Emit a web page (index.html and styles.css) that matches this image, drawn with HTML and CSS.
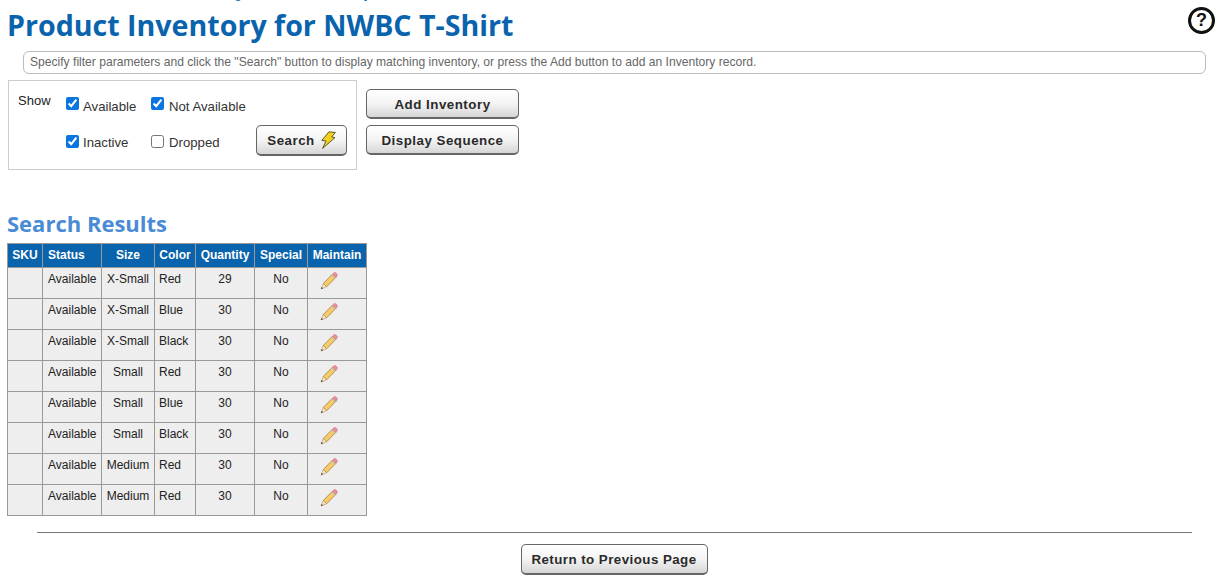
FILE: index.html
```html
<!DOCTYPE html>
<html lang="en">
<head>
  <meta charset="UTF-8">
  <title>Product Inventory</title>
  <link rel="stylesheet" href="styles.css">
</head>
<body>
  <svg class="icon-defs" width="0" height="0">
    <defs>
      <symbol id="pencil" viewBox="0 0 18 18">
        <path d="M3.4 11.4 L12.6 2 L15.9 5.3 L6.6 14.8 Z" fill="#f6cb68" stroke="#a47c3a" stroke-width="0.8"/>
        <path d="M3.4 11.4 L6.6 14.8 L1 17 Z" fill="#f5e6c8" stroke="#a47c3a" stroke-width="0.5"/>
        <path d="M1.7 15 L3 16.2 L1 17 Z" fill="#333"/>
        <path d="M12.6 2 L14 0.7 Q15 0.1 16.2 1.2 L17 2 Q17.8 3.1 17 4.1 L15.9 5.3 Z" fill="#ee8f99" stroke="#c8606e" stroke-width="0.5"/>
        <path d="M11.8 2.8 L15.1 6.1" stroke="#bdbdbd" stroke-width="1.3"/>
      </symbol>
    </defs>
  </svg>

  <!-- Breadcrumb is scrolled off the top, only the descenders still show -->
  <div class="crumbs">Catalog &gt; Product Inventory</div>

  <!-- Title row, the help icon sits in the corner -->
  <header class="page-head">
    <h1 class="page-title">Product Inventory for NWBC T-Shirt</h1>
    <a href="#" class="help-link" aria-label="Help">?</a>
  </header>

  <p class="hint">Specify filter parameters and click the "Search" button to display matching inventory, or press the Add button to add an Inventory record.</p>

  <section class="controls">
    <form class="filter-box">
      <span class="filter-label">Show</span>
      <label class="check check-a check-top"><input type="checkbox" checked> Available</label>
      <label class="check check-b check-top"><input type="checkbox" checked> Not Available</label>
      <label class="check check-a"><input type="checkbox" checked> Inactive</label>
      <label class="check check-b"><input type="checkbox"> Dropped</label>
      <button type="button" class="btn btn-search">Search
        <svg class="bolt" viewBox="0 0 16 18" width="16" height="18">
          <path d="M9 0.8 L15.4 1.5 L11.6 6 L15 6.6 L2.6 17.4 L6 10 L1.8 9.4 Z" fill="#f2d21e" stroke="#5c5a2a" stroke-width="1"/>
        </svg>
      </button>
    </form>
    <div class="action-buttons">
      <button type="button" class="btn btn-wide">Add Inventory</button>
      <button type="button" class="btn btn-wide">Display Sequence</button>
    </div>
  </section>

  <h2 class="section-title">Search Results</h2>

  <table class="results">
    <colgroup>
      <col class="c-sku"><col class="c-status"><col class="c-size"><col class="c-color"><col class="c-qty"><col class="c-special"><col class="c-maintain">
    </colgroup>
    <thead>
      <tr><th>SKU</th><th class="left">Status</th><th>Size</th><th>Color</th><th>Quantity</th><th>Special</th><th>Maintain</th></tr>
    </thead>
    <tbody>
      <tr><td></td><td>Available</td><td class="mid">X-Small</td><td class="color">Red</td><td class="mid">29</td><td class="mid">No</td><td class="edit"><svg width="18" height="18"><use href="#pencil"/></svg></td></tr>
      <tr><td></td><td>Available</td><td class="mid">X-Small</td><td class="color">Blue</td><td class="mid">30</td><td class="mid">No</td><td class="edit"><svg width="18" height="18"><use href="#pencil"/></svg></td></tr>
      <tr><td></td><td>Available</td><td class="mid">X-Small</td><td class="color">Black</td><td class="mid">30</td><td class="mid">No</td><td class="edit"><svg width="18" height="18"><use href="#pencil"/></svg></td></tr>
      <tr><td></td><td>Available</td><td class="mid">Small</td><td class="color">Red</td><td class="mid">30</td><td class="mid">No</td><td class="edit"><svg width="18" height="18"><use href="#pencil"/></svg></td></tr>
      <tr><td></td><td>Available</td><td class="mid">Small</td><td class="color">Blue</td><td class="mid">30</td><td class="mid">No</td><td class="edit"><svg width="18" height="18"><use href="#pencil"/></svg></td></tr>
      <tr><td></td><td>Available</td><td class="mid">Small</td><td class="color">Black</td><td class="mid">30</td><td class="mid">No</td><td class="edit"><svg width="18" height="18"><use href="#pencil"/></svg></td></tr>
      <tr><td></td><td>Available</td><td class="mid">Medium</td><td class="color">Red</td><td class="mid">30</td><td class="mid">No</td><td class="edit"><svg width="18" height="18"><use href="#pencil"/></svg></td></tr>
      <tr><td></td><td>Available</td><td class="mid">Medium</td><td class="color">Red</td><td class="mid">30</td><td class="mid">No</td><td class="edit"><svg width="18" height="18"><use href="#pencil"/></svg></td></tr>
    </tbody>
  </table>

  <hr class="rule">

  <div class="footer-actions">
    <button type="button" class="btn btn-return">Return to Previous Page</button>
  </div>
</body>
</html>
```

FILE: styles.css
```css
* {
  box-sizing: border-box;
}

body {
  margin: 0;
  padding: 0 7px;
  height: 584px;
  overflow: hidden;
  background-color: white;
  color: #222;
  font-family: 'Liberation Sans', Arial, sans-serif;
  font-size: 12px;
}

.icon-defs {
  display: block;
  height: 0;
}

.crumbs {
  height: 14px;
  margin-top: -14px;
  padding-left: 190px;
  color: #0a63ad;
  font-size: 13px;
  line-height: 15px;
  word-spacing: 4px;
  white-space: nowrap;
}

.page-head {
  display: flex;
  justify-content: space-between;
  align-items: flex-start;
  height: 51px;
  padding-top: 6px;
}

.page-title {
  margin: 0;
  font-family: 'Open Sans', sans-serif;
  font-size: 28.6px;
  line-height: 38px;
  font-weight: 700;
  color: #0a63ad;
}

.help-link {
  width: 27px;
  height: 27px;
  margin: 1px 4px 0 0;
  border: 3px solid #111;
  border-radius: 50%;
  color: #111;
  font-size: 18px;
  font-weight: 700;
  line-height: 21px;
  text-align: center;
  text-decoration: none;
}

.hint {
  height: 23px;
  margin: 0 13px 0 16px;
  padding: 0 6px;
  border: 1px solid #bbb;
  border-radius: 6px;
  color: #666;
  font-size: 12.1px;
  line-height: 20px;
}

.controls {
  display: flex;
  gap: 9px;
  margin: 6px 0 0 1px;
}

.filter-box {
  display: grid;
  grid-template-columns: 48px 85px 105px 1fr;
  grid-template-rows: 36px 36px;
  width: 349px;
  height: 90px;
  padding: 8px 9px;
  border: 1px solid #ccc;
}

.filter-label {
  grid-row: 1;
  padding-top: 4px;
  font-size: 13px;
}

.check {
  display: flex;
  align-items: center;
  gap: 4px;
  height: 26px;
  padding-top: 8px;
  font-size: 13.2px;
  white-space: nowrap;
  color: #333;
}

.check input {
  width: 13px;
  height: 13px;
  margin: -1px 0 0 0;
  accent-color: #0a75e0;
}

.check-top input {
  margin-top: -5px;
}

.check-a {
  grid-column: 2;
}

.check-b {
  grid-column: 3;
  gap: 5px;
}

/* Inactive sits under the Available box, second row */
.check-a:nth-of-type(3),
.check-b:nth-of-type(4) {
  grid-row: 2;
}

.btn {
  height: 30px;
  padding: 1px 10px 0;
  border: 1px solid #666;
  border-bottom-width: 2px;
  border-radius: 5px;
  background: linear-gradient(to bottom, #ffffff 0%, #f4f4f4 50%, #d6d6d6 100%);
  color: #2a2a2a;
  font-family: 'Liberation Sans', Arial, sans-serif;
  font-size: 13.33px;
  font-weight: 700;
  letter-spacing: 0.5px;
  cursor: pointer;
}

.btn-search {
  grid-column: 4;
  grid-row: 2;
  display: flex;
  align-items: center;
  justify-content: center;
  gap: 5px;
  width: 91px;
  height: 31px;
  margin: 0;
  padding: 0;
}

.bolt {
  display: block;
}

.action-buttons {
  display: flex;
  flex-direction: column;
  gap: 6px;
  padding-top: 9px;
}

.btn-wide {
  width: 153px;
}

.section-title {
  margin: 36px 0 3px;
  font-family: 'Open Sans', sans-serif;
  font-size: 22px;
  line-height: 34px;
  font-weight: 700;
  color: #4a8bd6;
}

.results {
  width: 359px;
  border-collapse: collapse;
  table-layout: fixed;
  font-size: 12px;
}

.c-sku { width: 35px; }
.c-status { width: 59px; }
.c-size { width: 53px; }
.c-color { width: 41px; }
.c-qty { width: 59px; }
.c-special { width: 53px; }
.c-maintain { width: 59px; }

.results th,
.results td {
  border: 1px solid #999;
  padding: 0 4px 0 5px;
  overflow: hidden;
  white-space: nowrap;
}

.results th {
  height: 24px;
  padding: 0 0 2px;
  background-color: #0a63ad;
  color: white;
  text-align: center;
}

.results th.left {
  padding-left: 5px;
  text-align: left;
}

.results td {
  height: 31px;
  padding-top: 2px;
  padding-bottom: 11px;
  background-color: #eeeeee;
  color: #222;
  line-height: 16px;
}

.results td.mid {
  padding-left: 4px;
  text-align: center;
}

.results td.color {
  padding-left: 4px;
}

.results td.edit {
  padding: 0 0 4px 12px;
}

.results td.edit svg {
  display: block;
}

.rule {
  height: 1px;
  margin: 16px 27px 0 30px;
  border: 0;
  background-color: #777;
}

.footer-actions {
  display: flex;
  justify-content: center;
  margin-top: 11px;
  padding-left: 2px;
}

.btn-return {
  width: 187px;
  height: 31px;
  padding: 0;
  letter-spacing: 0.45px;
}
```
